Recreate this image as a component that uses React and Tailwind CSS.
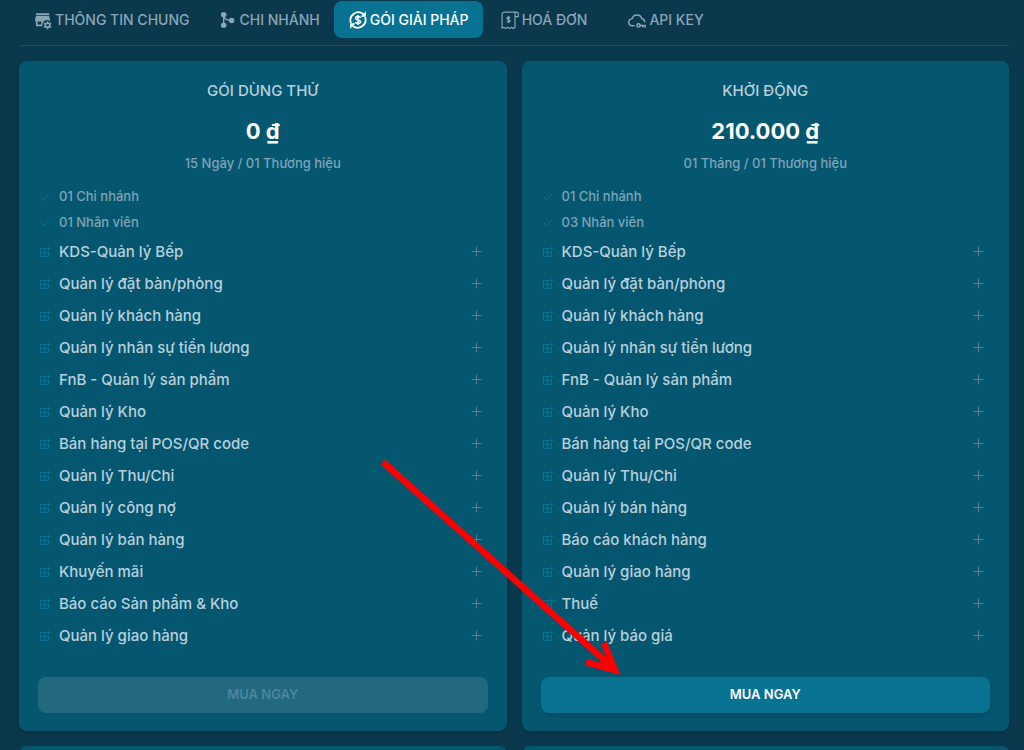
import { useState } from 'react';

const StoreCogIcon = () => (
  <svg viewBox="0 0 24 24" className="size-5 shrink-0" fill="currentColor" aria-hidden="true">
    <path d="M3.500 4h16v2.200h-16zM3.600 7.200h15.800l1.100 4.600v1.500a5.500 5.500 0 0 0-6.500-.3h-1v1a5.500 5.500 0 0 0-1.700 4v1.500H3.500v-6H2.500v-1.700zM5.500 13.800v3.700h4.500v-3.700z" fillRule="evenodd" />
    <circle cx="17.500" cy="18.300" r="2.600" fill="none" stroke="currentColor" strokeWidth="1.900" />
    <path d="M17.500 13.500v1.700M17.500 21.400v1.700M13.300 15.900l1.500.9M20.200 19.800l1.500.9M13.300 20.700l1.500-.9M20.200 16.800l1.500-.9" fill="none" stroke="currentColor" strokeWidth="1.800" />
  </svg>
);

const BranchIcon = () => (
  <svg viewBox="0 0 24 24" className="size-5 shrink-0" fill="currentColor" aria-hidden="true">
    <circle cx="8" cy="5.800" r="3.300" />
    <circle cx="8" cy="18.200" r="3.300" />
    <circle cx="17.500" cy="12.500" r="3.300" />
    <path d="M8 6v12M8 6c0 5 3 6.500 9.500 6.500" fill="none" stroke="currentColor" strokeWidth="1.600" />
  </svg>
);

const MoneyCycleIcon = () => (
  <svg viewBox="0 0 24 24" className="size-5 shrink-0" fill="none" stroke="currentColor" strokeWidth="2.200" aria-hidden="true">
    <path d="M3.500 15.500A9.500 9.500 0 0 1 18.500 5M20.500 8.500A9.500 9.500 0 0 1 5.500 19" />
    <path d="M21.500 1.500v6.500h-6.500zM2.500 22.500v-6.500h6.500z" fill="currentColor" stroke="none" />
    <path d="M15 9.500c-.4-1.100-1.500-1.600-3-1.600-1.700 0-2.900.7-2.900 2 0 3 5.900 1.300 5.900 4.200 0 1.300-1.200 2-3 2-1.500 0-2.600-.5-3-1.700M12 6v12" strokeWidth="1.900" />
  </svg>
);

const InvoiceIcon = () => (
  <svg viewBox="0 0 24 24" className="size-5 shrink-0" fill="none" stroke="currentColor" strokeWidth="1.400" strokeLinejoin="round" aria-hidden="true">
    <path d="M20 2.500H5.500A3 3 0 0 0 2.500 5.500v16.500l2-1.300 2.300 1.500 2.300-1.500 2.300 1.500 2.300-1.500 2.300 1.500 2-1.500V5c0-1.500.8-2.500 2-2.500s2 1 2 2.500v3h-4" />
    <path d="M12.200 9.500c-.3-.7-1-1-2-1-1.200 0-2 .5-2 1.500 0 2 4 1 4 3 0 1-.8 1.500-2 1.500-1 0-1.800-.4-2.100-1.200M10.200 7v9" />
  </svg>
);

const CloudKeyIcon = () => (
  <svg viewBox="0 0 24 24" className="size-5 shrink-0" fill="none" stroke="currentColor" strokeWidth="1.800" strokeLinecap="round" strokeLinejoin="round" aria-hidden="true">
    <path d="M8.500 19H6.500a4.300 4.300 0 0 1-.3-8.600 6 6 0 0 1 11.600 0c1.900.3 3.400 1.700 3.400 3.800" />
    <circle cx="13.800" cy="18.500" r="2" />
    <path d="M15.800 18.500h6v2M19 18.500v2" />
  </svg>
);

const CheckIcon = () => (
  <svg viewBox="0 0 12 12" className="size-3 shrink-0 text-[#077292]" fill="none" stroke="currentColor" aria-hidden="true">
    <path d="M2 6l2.500 2.500L10 3" />
  </svg>
);

const ModuleIcon = () => (
  <svg viewBox="0 0 12 12" className="size-3 shrink-0 text-[#077292]" fill="none" stroke="currentColor" aria-hidden="true">
    <path d="M7 2.500H1.500v8h8V6M5.500 2.500v8M1.500 6.500h8M9.500 .500v4M7.500 2.500h4" />
  </svg>
);

const PlusIcon = () => (
  <svg viewBox="0 0 12 12" className="size-3 text-[#5d7f93]" fill="none" stroke="currentColor" aria-hidden="true">
    <path d="M6.500 .500v10M1.500 5.500h10" />
  </svg>
);

const tabs = [
  { key: 'info', label: 'THÔNG TIN CHUNG', Icon: StoreCogIcon },
  { key: 'branch', label: 'CHI NHÁNH', Icon: BranchIcon },
  { key: 'plans', label: 'GÓI GIẢI PHÁP', Icon: MoneyCycleIcon },
  { key: 'invoice', label: 'HOÁ ĐƠN', Icon: InvoiceIcon },
  { key: 'api', label: 'API KEY', Icon: CloudKeyIcon },
];

const plans = [
  {
    name: 'GÓI DÙNG THỬ',
    price: '0 ₫',
    period: '15 Ngày / 01 Thương hiệu',
    limits: ['01 Chi nhánh', '01 Nhân viên'],
    disabled: true,
    features: [
      'KDS-Quản lý Bếp', 'Quản lý đặt bàn/phòng', 'Quản lý khách hàng', 'Quản lý nhân sự tiền lương',
      'FnB - Quản lý sản phẩm', 'Quản lý Kho', 'Bán hàng tại POS/QR code', 'Quản lý Thu/Chi',
      'Quản lý công nợ', 'Quản lý bán hàng', 'Khuyến mãi', 'Báo cáo Sản phẩm & Kho', 'Quản lý giao hàng',
    ],
  },
  {
    name: 'KHỞI ĐỘNG',
    price: '210.000 ₫',
    period: '01 Tháng / 01 Thương hiệu',
    limits: ['01 Chi nhánh', '03 Nhân viên'],
    disabled: false,
    features: [
      'KDS-Quản lý Bếp', 'Quản lý đặt bàn/phòng', 'Quản lý khách hàng', 'Quản lý nhân sự tiền lương',
      'FnB - Quản lý sản phẩm', 'Quản lý Kho', 'Bán hàng tại POS/QR code', 'Quản lý Thu/Chi',
      'Quản lý bán hàng', 'Báo cáo khách hàng', 'Quản lý giao hàng', 'Thuế', 'Quản lý báo giá',
    ],
  },
];

const PlanCard = ({ plan }) => (
  <section className="rounded-lg bg-[#055770] px-[19px] py-[18px] font-medium shadow-md">
    <div className="text-center">
      <h2 className="text-[15px] leading-6 text-[#b9cfdc]">{plan.name}</h2>
      <p className="mt-3 text-[22px] leading-8 font-bold text-white">{plan.price}</p>
      <p className="mt-1.5 text-[13px] leading-5 text-[#7da4b7]">{plan.period}</p>
    </div>
    <ul className="mt-[11px]">
      {plan.limits.map((limit) => (
        <li key={limit} className="flex h-[26px] items-center gap-2 pl-px text-[13px] text-[#7da4b7]">
          <CheckIcon />
          {limit}
        </li>
      ))}
      {plan.features.map((feature) => (
        <li key={feature}>
          <button type="button" className="flex h-8 w-full items-center gap-2 pr-1.5 pl-px text-left text-[15px] text-[#b9cfdc]">
            <ModuleIcon />
            <span className="flex-1">{feature}</span>
            <PlusIcon />
          </button>
        </li>
      ))}
    </ul>
    <button
      type="button"
      disabled={plan.disabled}
      className={`mt-[25px] h-9 w-full rounded-lg text-[13px] font-semibold ${
        plan.disabled ? 'bg-[#226980] text-[#4d859b]' : 'bg-[#077292] text-white shadow-md'
      }`}
    >
      MUA NGAY
    </button>
  </section>
);

export default function App() {
  const [active, setActive] = useState('plans');

  return (
    <div className="relative h-screen overflow-hidden bg-[#0a394d] font-['Inter',sans-serif]">
      <div className="pr-[15px] pl-[19px]">
        <nav className="flex border-b border-[#1b4f64] pt-px pb-[7px]">
          {tabs.map(({ key, label, Icon }) => (
            <button
              key={key}
              type="button"
              onClick={() => setActive(key)}
              className={`flex h-[37px] min-w-[122px] items-center justify-center gap-0.5 rounded-lg px-3.5 text-sm font-medium ${
                active === key ? 'bg-[#077292] text-white' : 'text-[#8aa5b5]'
              }`}
            >
              <Icon />
              {label}
            </button>
          ))}
        </nav>
        <main className="mt-[15px] grid grid-cols-2 gap-[15px]">
          {plans.map((plan) => <PlanCard key={plan.name} plan={plan} />)}
          <div className="h-20 rounded-lg bg-[#055770]" />
          <div className="h-20 rounded-lg bg-[#055770]" />
        </main>
      </div>

      {/* Pointer to the buy button */}
      <svg viewBox="0 0 1024 750" className="pointer-events-none absolute top-0 left-0 w-full" aria-hidden="true">
        <path d="M383 462L612 667" stroke="#ff0000" strokeWidth="6.500" />
        <path d="M586 662L615 670L604 643" fill="none" stroke="#ff0000" strokeWidth="6.500" />
      </svg>
    </div>
  );
}
